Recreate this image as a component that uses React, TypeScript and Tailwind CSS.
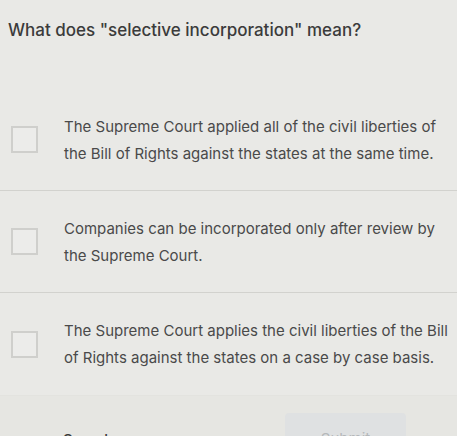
const OPTIONS = [
  "The Supreme Court applied all of the civil liberties of the Bill of Rights against the states at the same time.",
  "Companies can be incorporated only after review by the Supreme Court.",
  "The Supreme Court applies the civil liberties of the Bill of Rights against the states on a case by case basis.",
];

export default function App() {
  return (
    <div
      className="h-[436px] w-[457px] overflow-hidden bg-[#e9e9e6] text-[#454545]"
      style={{ fontFamily: "Inter, 'Noto Sans', sans-serif" }}
    >
      <h1 className="px-[8px] pt-[18px] text-[17px] font-medium leading-[24px] text-[#3b3b3b]">
        What does "selective incorporation" mean?
      </h1>
      <ul className="mt-[47px]">
        {OPTIONS.map((text, index) => (
          <li
            key={text}
            className={`flex h-[102px] items-center ${
              index < OPTIONS.length - 1 ? "border-b border-[#d2d2ce]" : ""
            }`}
          >
            <span className="ml-[11px] h-[27px] w-[27px] shrink-0 border-2 border-[#cfcfcc] bg-[#ececea]" />
            <p className="ml-[26px] w-[392px] shrink-0 text-[15px] leading-[27px] text-[#4a4a4a]">
              {text}
            </p>
          </li>
        ))}
      </ul>
      <div className="flex items-start justify-between border-t border-[#e3e3df] bg-[#e6e6e2] pt-[17px]">
        <span className="ml-[63px] mt-[17px] text-[15px] font-medium leading-[20px] text-[#3b3b3b]">
          Search
        </span>
        <button
          type="button"
          className="mr-[51px] h-[40px] w-[121px] rounded-sm bg-[#dfe1e2] pt-[12px] text-[15px] leading-[20px] text-[#b5b8ba]"
        >
          Submit
        </button>
      </div>
    </div>
  );
}
